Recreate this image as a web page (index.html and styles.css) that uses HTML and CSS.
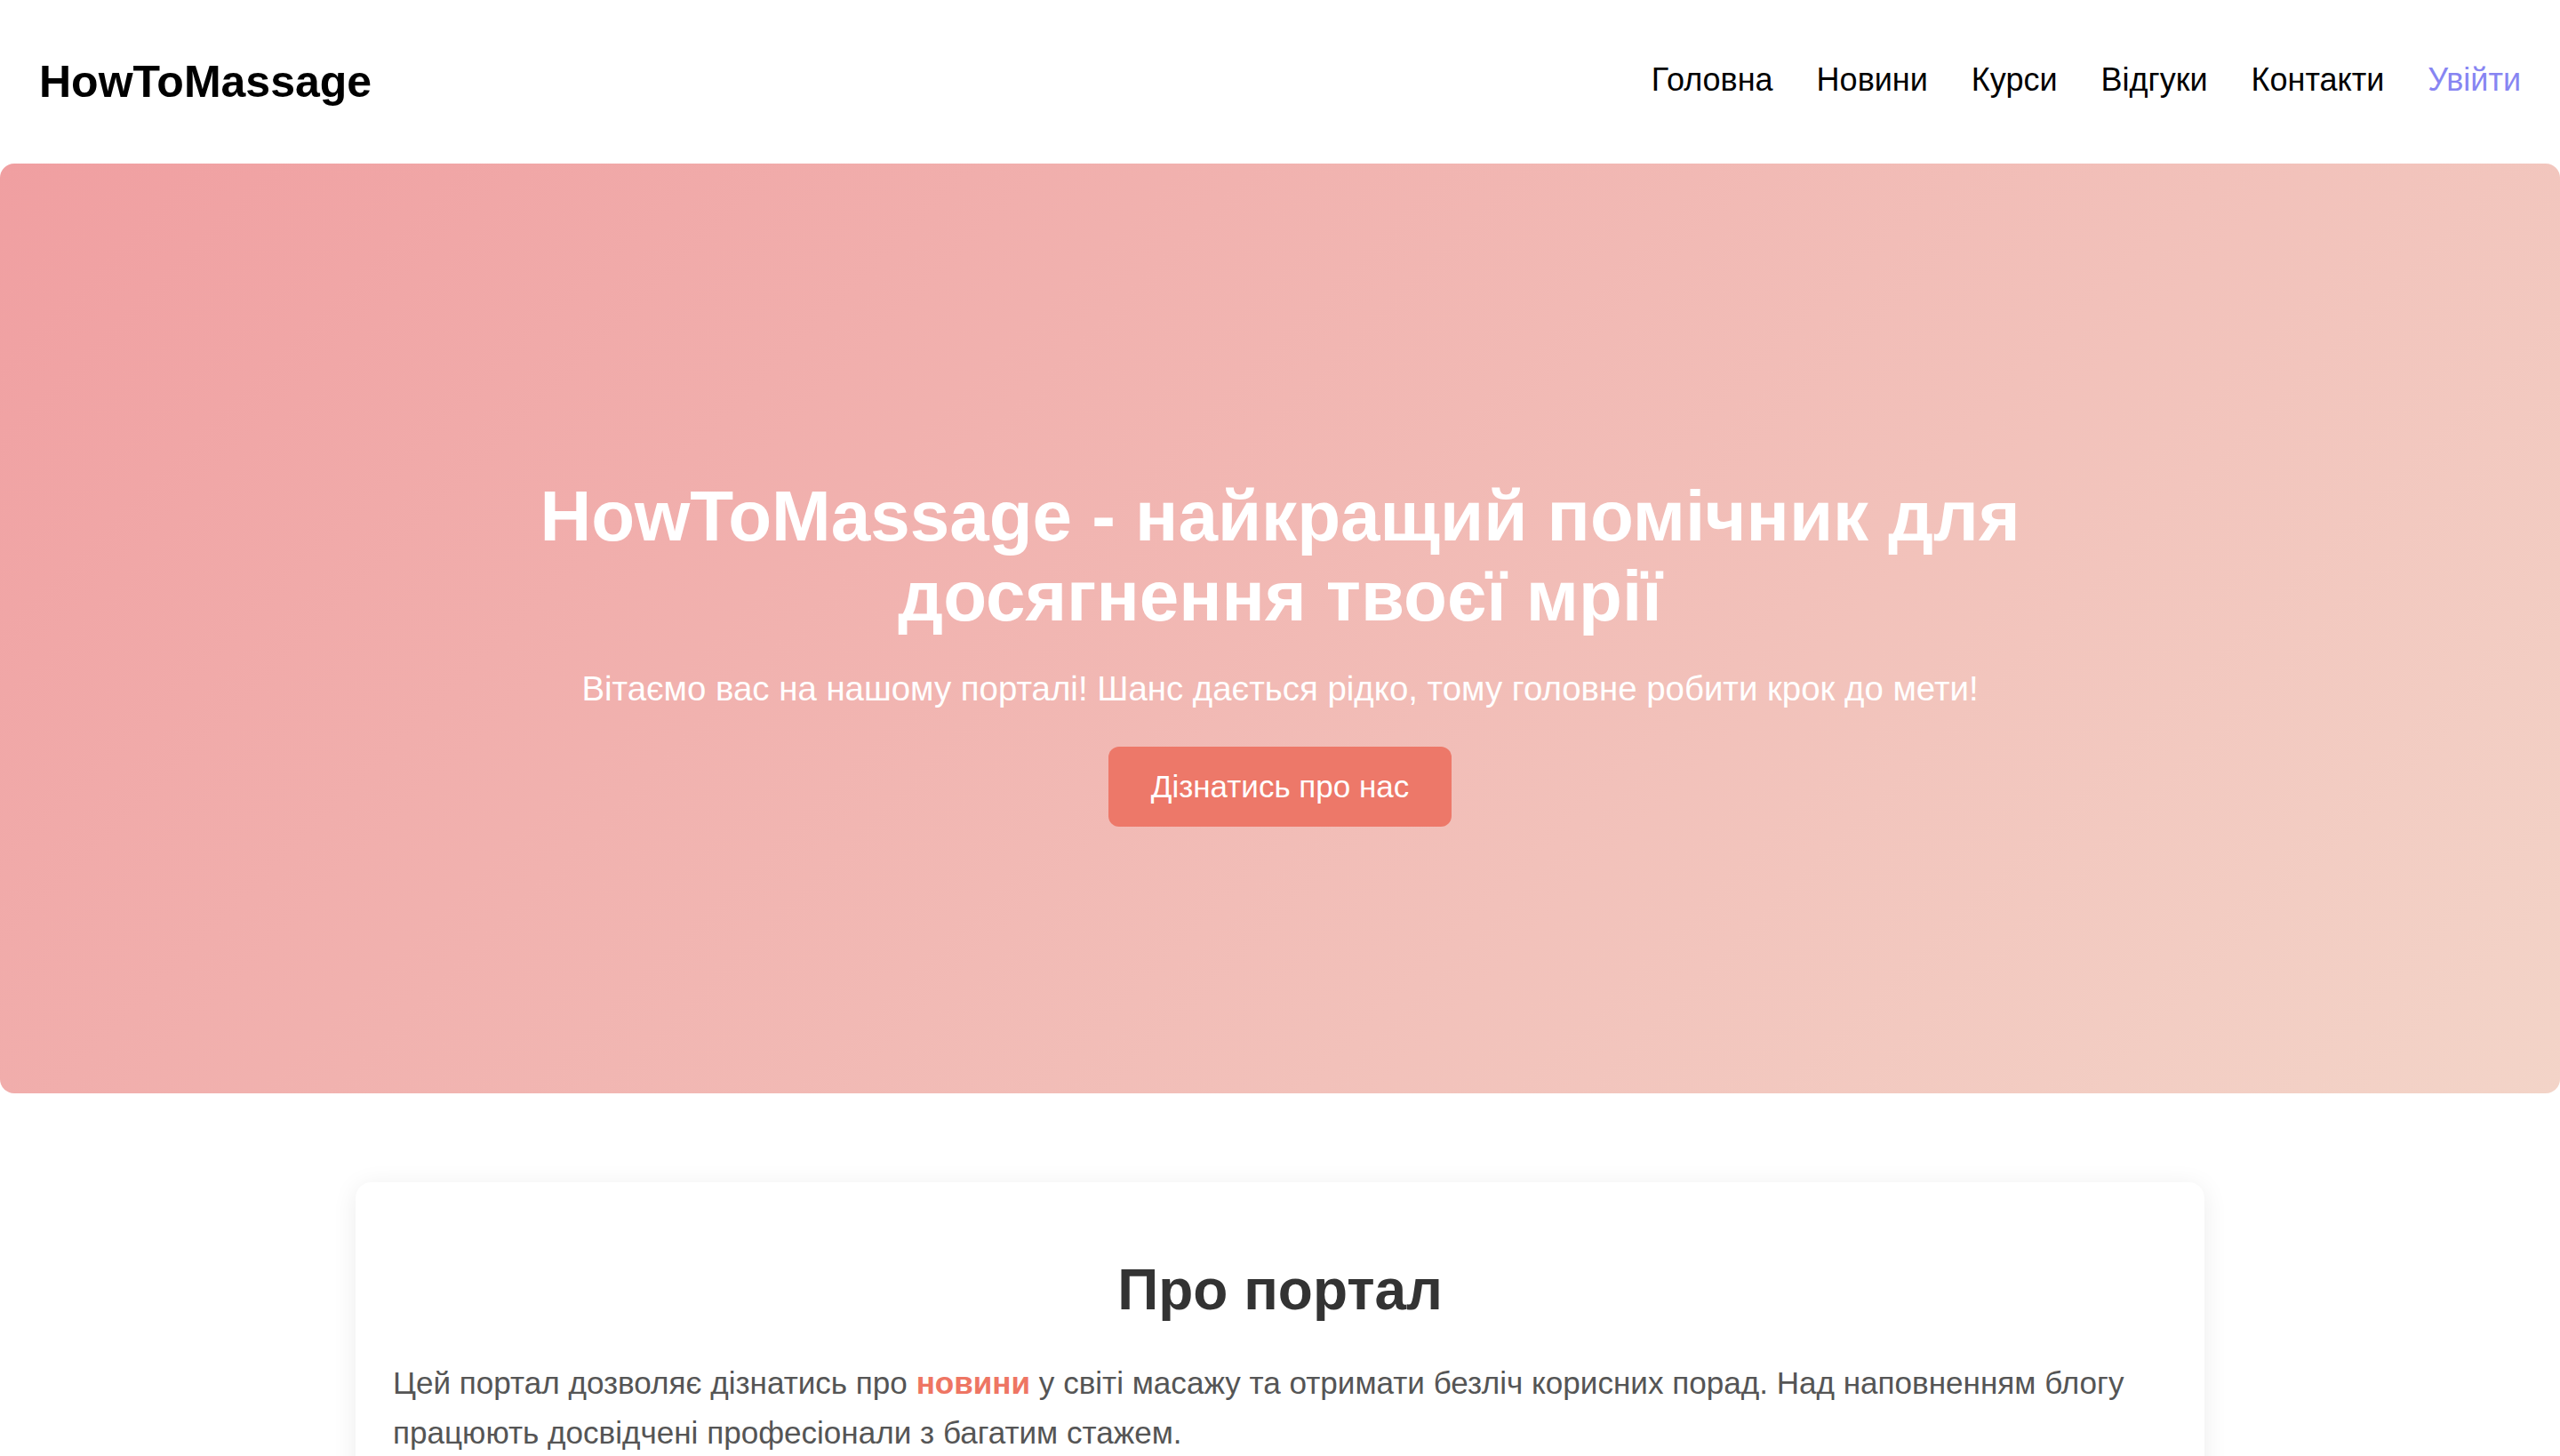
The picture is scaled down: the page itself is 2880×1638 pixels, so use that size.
FILE: index.html
```html
<!DOCTYPE html>
<html lang="uk">
<head>
<meta charset="utf-8">
<title>HowToMassage</title>
<link rel="stylesheet" href="styles.css">
</head>
<body>
<header class="site-header">
  <a class="logo" href="#">HowToMassage</a>
  <nav class="nav">
    <a href="#">Головна</a>
    <a href="#">Новини</a>
    <a href="#">Курси</a>
    <a href="#">Відгуки</a>
    <a href="#">Контакти</a>
    <a href="#" class="login">Увійти</a>
  </nav>
</header>
<section class="hero">
  <h1 class="hero-title">HowToMassage - найкращий помічник для<br>досягнення твоєї мрії</h1>
  <p class="hero-sub">Вітаємо вас на нашому порталі! Шанс дається рідко, тому головне робити крок до мети!</p>
  <a class="hero-btn" href="#">Дізнатись про нас</a>
</section>
<main class="content">
  <section class="card">
    <h2 class="card-title">Про портал</h2>
    <p class="card-text">Цей портал дозволяє дізнатись про <a class="accent" href="#">новини</a> у світі масажу та отримати безліч корисних порад. Над наповненням блогу працюють досвідчені професіонали з багатим стажем.</p>
  </section>
</main>
</body>
</html>
```
FILE: styles.css
```css
* { box-sizing: border-box; }
html, body { margin: 0; padding: 0; background: #fff; }
body { font-family: "Liberation Sans", Arial, sans-serif; color: #000; }
a { text-decoration: none; }

.site-header {
  height: 184px;
  display: flex;
  align-items: center;
  justify-content: space-between;
  padding: 0 44px 0 44px;
}
.logo { font-size: 50px; font-weight: 700; color: #000; }
.nav { display: flex; gap: 49px; align-items: center; margin-top: -4px; }
.nav a { font-size: 36px; color: #000; }
.nav a.login { color: #8785f2; }

.hero {
  height: 1046px;
  border-radius: 16px;
  background: linear-gradient(135deg, #f09fa1 0%, #f3d4c8 100%);
  display: flex;
  flex-direction: column;
  align-items: center;
  padding-top: 352px;
  text-align: center;
  color: #fff;
}
.hero-title {
  margin: 0;
  font-size: 80px;
  line-height: 90px;
  font-weight: 700;
}
.hero-sub {
  margin: 37px 0 43px;
  font-size: 38.4px;
}
.hero-btn {
  display: inline-block;
  background: #ed7869;
  color: #fff;
  font-size: 35px;
  line-height: 40px;
  padding: 25px 48px;
  border-radius: 12px;
}

.content { padding: 100px 400px 80px; }
.card {
  background: #fff;
  border-radius: 18px;
  box-shadow: 0 4px 28px rgba(0, 0, 0, 0.08);
  padding: 42px 42px 60px;
}
.card-title {
  margin: 42px 0 40px;
  text-align: center;
  font-size: 64px;
  font-weight: 700;
  color: #333;
}
.card-text {
  margin: 0;
  font-size: 35.1px;
  line-height: 56px;
  color: #555;
}
.accent { color: #ee7563; font-weight: 700; }
```
